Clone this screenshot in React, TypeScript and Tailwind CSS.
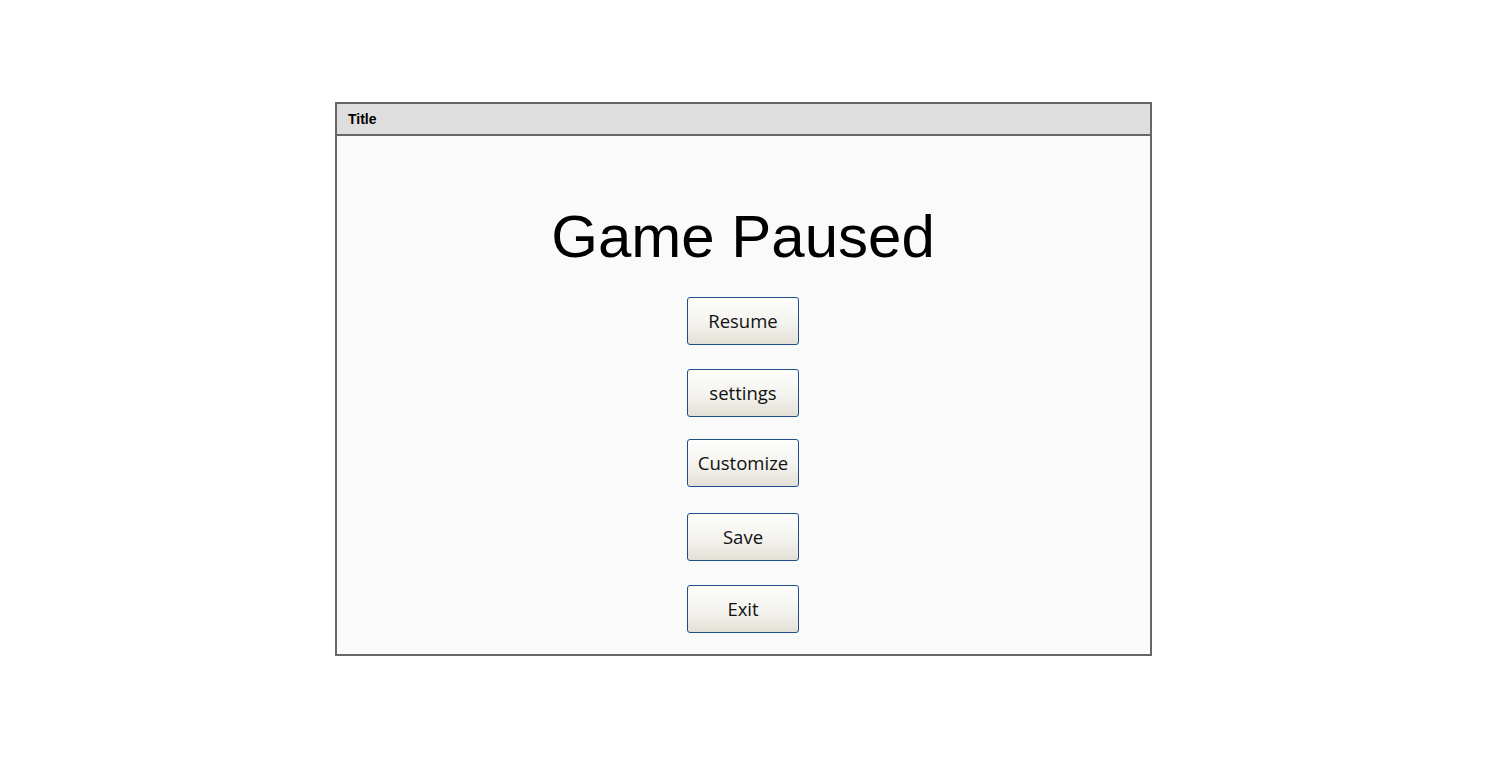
import React from "react";

const buttons = [
  { label: "Resume", mb: "mb-[24px]" },
  { label: "settings", mb: "mb-[22px]" },
  { label: "Customize", mb: "mb-[26px]" },
  { label: "Save", mb: "mb-[24px]" },
  { label: "Exit", mb: "mb-0" },
];

export default function App() {
  return (
    <div className="min-h-screen w-full bg-white pt-[102px]">
      <div className="ml-[335px] flex h-[554px] w-[817px] flex-col border-2 border-[#666666] bg-[#fafafa]">
        {/* title bar */}
        <div className="flex h-[32px] shrink-0 items-center border-b-2 border-[#666666] bg-[#dedede] pl-[11px] pt-[1px]">
          <span className="font-['Liberation_Sans',Arial,sans-serif] text-[14px] font-bold text-black">Title</span>
        </div>

        {/* body */}
        <div className="flex flex-1 flex-col items-center pr-[1px] pt-[71px]">
          <h1 className="mb-[30px] font-['Liberation_Sans',Arial,sans-serif] text-[60px] leading-[60px] text-black">
            Game Paused
          </h1>
          {buttons.map((b) => (
            <button
              key={b.label}
              type="button"
              className={`${b.mb} flex h-[48px] w-[112px] items-center justify-center rounded-[3px] border border-[#1c4f8c] bg-gradient-to-b from-[#fdfdfc] via-[#f5f4f0] to-[#e2e0d6] font-['Open_Sans','Noto_Sans',sans-serif] text-[18.5px] text-[#111111]`}
            >
              {b.label}
            </button>
          ))}
        </div>
      </div>
    </div>
  );
}
